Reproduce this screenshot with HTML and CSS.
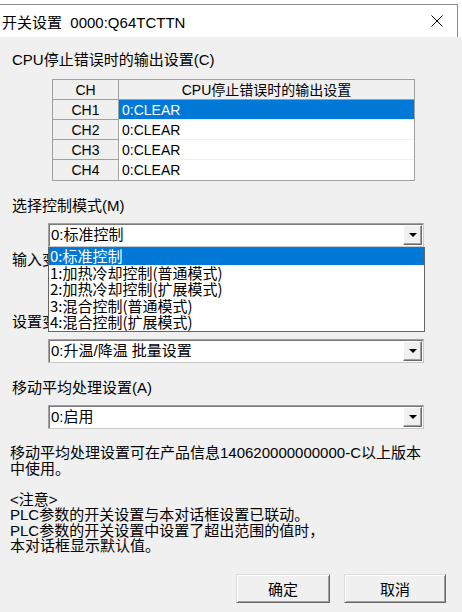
FILE: index.html
```html
<!DOCTYPE html>
<html lang="zh-CN">
<head>
    <meta charset="UTF-8">
    <meta name="viewport" content="width=device-width, initial-scale=1.0">
    <title>开关设置</title>
    <link rel="stylesheet" href="styles.css">
</head>
<body>
    <div class="titlebar">
        <div class="caption">
            <span class="title">开关设置&nbsp;&nbsp;0000:Q64TCTTN</span>
            <svg class="close" width="12" height="12" viewBox="0 0 12 12">
                <path d="M0.5 0.5 L11.5 11.5 M11.5 0.5 L0.5 11.5" stroke="#000" stroke-width="1" fill="none"/>
            </svg>
        </div>
    </div>

    <div class="dialog">
        <div class="label first">CPU停止错误时的输出设置(C)</div>
        <table class="grid">
            <tr>
                <th class="ch">CH</th>
                <th class="val">CPU停止错误时的输出设置</th>
            </tr>
            <tr>
                <td class="ch">CH1</td>
                <td class="val selected">0:CLEAR</td>
            </tr>
            <tr>
                <td class="ch">CH2</td>
                <td class="val">0:CLEAR</td>
            </tr>
            <tr>
                <td class="ch">CH3</td>
                <td class="val">0:CLEAR</td>
            </tr>
            <tr>
                <td class="ch">CH4</td>
                <td class="val">0:CLEAR</td>
            </tr>
        </table>

        <div class="label mode">选择控制模式(M)</div>
        <div class="combo">
            <span class="combo-text">0:标准控制</span>
            <span class="combo-btn"></span>
            <!-- open drop-down list -->
            <ul class="droplist">
                <li class="selected">0:标准控制</li>
                <li>1:加热冷却控制(普通模式)</li>
                <li>2:加热冷却控制(扩展模式)</li>
                <li>3:混合控制(普通模式)</li>
                <li>4:混合控制(扩展模式)</li>
            </ul>
        </div>

        <!-- these two rows sit under the open list -->
        <div class="label input covered">输入变换设置(I)</div>
        <div class="combo">
            <span class="combo-text"></span>
            <span class="combo-btn"></span>
        </div>

        <div class="label rate covered">设置变化速率设置(R)</div>
        <div class="combo">
            <span class="combo-text">0:升温/降温 批量设置</span>
            <span class="combo-btn"></span>
        </div>

        <div class="label average">移动平均处理设置(A)</div>
        <div class="combo">
            <span class="combo-text">0:启用</span>
            <span class="combo-btn"></span>
        </div>

        <div class="notes">
            移动平均处理设置可在产品信息140620000000000-C以上版本<br>
            中使用。<br>
            <br>
            &lt;注意&gt;<br>
            PLC参数的开关设置与本对话框设置已联动。<br>
            PLC参数的开关设置中设置了超出范围的值时，<br>
            本对话框显示默认值。
        </div>

        <div class="actions">
            <button class="btn ok">确定</button>
            <button class="btn cancel">取消</button>
        </div>
    </div>
</body>
</html>
```

FILE: styles.css
```css
body {
    margin: 0;
    background-color: #f0f0f0;
    font-family: "Liberation Sans", "Noto Sans CJK SC", sans-serif;
    font-size: 15px;
    color: #000;
}
.titlebar {
    background-color: #fff;
    padding-top: 4px;
}
.caption {
    width: 458px;
    height: 33px;
    box-sizing: border-box;
    border-top: 1px solid #8c8c8c;
    border-right: 1px solid #8c8c8c;
    display: flex;
    align-items: center;
    padding-left: 2px;
}
.close {
    margin-left: auto;
    margin-right: 14px;
}
.dialog {
    padding: 0 12px;
}
.label {
    line-height: 18px;
    white-space: nowrap;
}
.label.covered {
    width: 36px;
    overflow: hidden;
}
.label.first {
    margin-top: 14px;
}
.label.mode {
    margin-top: 16px;
}
.label.input {
    margin-top: 4px;
}
.label.rate {
    margin-top: 12px;
}
.label.average {
    margin-top: 16px;
}
.grid {
    margin: 10px 0 0 40px;
    width: 363px;
    border-spacing: 0;
    border: 1px solid #a0a0a0;
    table-layout: fixed;
    font-size: 14px;
    background-color: #fff;
}
.grid tr {
    height: 20px;
}
.grid th,
.grid td {
    padding: 0;
    font-weight: normal;
    white-space: nowrap;
    line-height: 18px;
}
.grid .ch {
    width: 65px;
    text-align: center;
    background-color: #f0f0f0;
    border-right: 1px solid #a0a0a0;
    border-bottom: 1px solid #a0a0a0;
}
.grid th.val {
    text-align: center;
    background-color: #f0f0f0;
    border-bottom: 1px solid #a0a0a0;
}
.grid td.val {
    padding-left: 3px;
    border-bottom: 1px solid #f0f0f0;
}
.grid tr:last-child td {
    border-bottom: none;
}
.grid td.selected {
    background-color: #0078d7;
    color: #fff;
}
.combo {
    position: relative;
    display: flex;
    align-items: center;
    margin: 8px 0 0 36px;
    width: 376px;
    height: 24px;
    box-sizing: border-box;
    border: 1px solid #a0a0a0;
    border-right-color: #c8c8c8;
    border-bottom-color: #c8c8c8;
    box-shadow: inset 1px 1px 0 #7a7a7a;
    background-color: #fff;
}
.combo-text {
    flex: 1;
    padding-left: 2px;
    line-height: 20px;
    white-space: nowrap;
}
.combo-btn {
    position: relative;
    width: 19px;
    height: 20px;
    margin-right: 1px;
    box-sizing: border-box;
    background-color: #f0f0f0;
    border: 1px solid;
    border-color: #fff #696969 #696969 #fff;
    box-shadow: inset -1px -1px 0 #a0a0a0;
}
.combo-btn::after {
    content: "";
    position: absolute;
    left: 5px;
    top: 7px;
    border-left: 4px solid transparent;
    border-right: 4px solid transparent;
    border-top: 4px solid #000;
}
.droplist {
    position: absolute;
    top: calc(100% + 1px);
    left: -1px;
    width: 377px;
    box-sizing: border-box;
    margin: 0;
    padding: 0;
    list-style: none;
    border: 1px solid #646464;
    background-color: #fff;
    z-index: 2;
    font-family: "Noto Sans CJK SC", sans-serif;
}
.droplist li {
    height: 16.6px;
    line-height: 16.6px;
    padding-left: 1px;
    white-space: nowrap;
}
.droplist li.selected {
    background-color: #0078d7;
    color: #fff;
}
.notes {
    margin: 16px 0 0 -2px;
    line-height: 15.5px;
    white-space: nowrap;
}
.actions {
    display: flex;
    justify-content: flex-end;
    gap: 14px;
    margin: 20px 4px 0 0;
}
.btn {
    height: 29px;
    padding: 0;
    font-family: "Noto Sans CJK SC", sans-serif;
    font-size: 15px;
    color: #000;
    background-color: #f0f0f0;
    border: 1px solid;
    border-color: #dcdcdc #696969 #696969 #dcdcdc;
    box-shadow: inset 1px 1px 0 #fff, inset -1px -1px 0 #a0a0a0;
}
.btn.ok {
    width: 94px;
}
.btn.cancel {
    width: 102px;
}
```
